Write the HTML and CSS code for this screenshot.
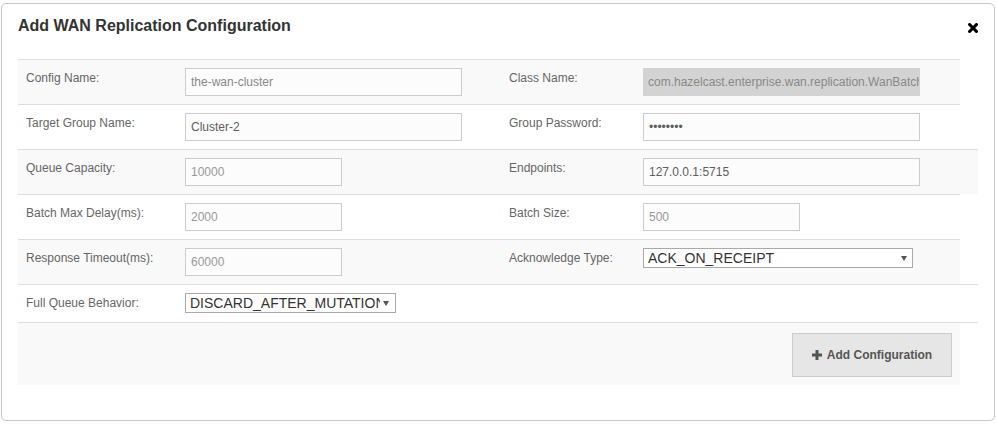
FILE: index.html
```html
<!DOCTYPE html>
<html>
<head>
<meta charset="utf-8">
<title>Add WAN Replication Configuration</title>
<link rel="stylesheet" href="styles.css">
</head>
<body>
<div class="modal">
  <div class="modal-header">
    <h4 class="modal-title">Add WAN Replication Configuration</h4>
    <button class="close" type="button" aria-label="Close">
      <svg width="10" height="10" viewBox="0 0 10 10"><path d="M1.6 1.6 L8.4 8.4 M8.4 1.6 L1.6 8.4" stroke="#000" stroke-width="3" stroke-linecap="square" fill="none"/></svg>
    </button>
  </div>
  <div class="modal-body">
    <div class="form-table">
      <div class="form-row striped">
        <label class="cell label">Config Name:</label>
        <div class="cell"><input class="input long muted" type="text" value="the-wan-cluster"></div>
        <label class="cell label">Class Name:</label>
        <div class="cell"><input class="input long disabled" type="text" value="com.hazelcast.enterprise.wan.replication.WanBatchReplication" disabled></div>
      </div>
      <div class="form-row">
        <label class="cell label">Target Group Name:</label>
        <div class="cell"><input class="input long value" type="text" value="Cluster-2"></div>
        <label class="cell label">Group Password:</label>
        <div class="cell"><input class="input long value" type="password" value="password"></div>
      </div>
      <div class="form-row striped wide">
        <label class="cell label">Queue Capacity:</label>
        <div class="cell"><input class="input short" type="text" value="10000"></div>
        <label class="cell label">Endpoints:</label>
        <div class="cell"><input class="input long value" type="text" value="127.0.0.1:5715"></div>
      </div>
      <div class="form-row">
        <label class="cell label">Batch Max Delay(ms):</label>
        <div class="cell"><input class="input short" type="text" value="2000"></div>
        <label class="cell label">Batch Size:</label>
        <div class="cell"><input class="input short" type="text" value="500"></div>
      </div>
      <div class="form-row striped">
        <label class="cell label">Response Timeout(ms):</label>
        <div class="cell"><input class="input short" type="text" value="60000"></div>
        <label class="cell label">Acknowledge Type:</label>
        <div class="cell"><span class="select-wrap ack"><select class="select"><option>ACK_ON_RECEIPT</option><option>ACK_ON_OPERATION_COMPLETE</option></select></span></div>
      </div>
      <div class="form-row wide closing">
        <label class="cell label">Full Queue Behavior:</label>
        <div class="cell"><span class="select-wrap queue"><select class="select"><option>DISCARD_AFTER_MUTATION</option><option>THROW_EXCEPTION</option></select></span></div>
        <div class="cell"></div>
        <div class="cell"></div>
      </div>
      <div class="actions">
        <button class="btn" type="button">
          <svg width="10" height="10" viewBox="0 0 10 10"><rect x="3.5" y="0" width="3" height="10" fill="#555"/><rect x="0" y="3.5" width="10" height="3" fill="#555"/></svg>
          <span>Add Configuration</span>
        </button>
      </div>
    </div>
  </div>
</div>
</body>
</html>
```
FILE: styles.css
```css
html, body {
  margin: 0;
  padding: 0;
  background: #fff;
  font-family: "Liberation Sans", Arial, sans-serif;
}

.modal {
  margin: 3px 2px 0 1px;
  height: 418px;
  box-sizing: border-box;
  border: 1px solid #c8c8c8;
  border-radius: 5px;
  background: #fff;
  box-shadow: 0 1px 2px rgba(0, 0, 0, 0.04);
}

.modal-header {
  display: flex;
  justify-content: space-between;
  align-items: flex-start;
  padding: 13px 16px 0 16px;
}

.modal-title {
  margin: 0;
  font-size: 16px;
  line-height: 18px;
  font-weight: bold;
  color: #333;
}

.close {
  display: block;
  width: 10px;
  height: 10px;
  margin-top: 6px;
  padding: 0;
  border: 0;
  background: none;
}

.close svg {
  display: block;
}

.modal-body {
  padding: 24px 0 0 16px;
}

.form-row {
  display: grid;
  grid-template-columns: 159px 324px 134px 325px;
  width: 942px;
  border-top: 1px solid #ddd;
}

.form-row.wide {
  grid-template-columns: 159px 324px 134px 343px;
  width: 960px;
}

.form-row.closing {
  border-bottom: 1px solid #ddd;
}

.form-row.closing .cell {
  padding-bottom: 9px;
}

.striped {
  background: #f9f9f9;
}

.cell {
  padding: 8px;
  font-size: 12px;
  line-height: 20px;
  color: #666;
}

.input {
  display: block;
  box-sizing: border-box;
  height: 28px;
  margin: 0;
  padding: 0 5px;
  border: 1px solid #ccc;
  border-radius: 0;
  background: #fcfcfc;
  font-family: "Liberation Sans", Arial, sans-serif;
  font-size: 12px;
  color: #999;
  outline: none;
}

.input.long {
  width: 277px;
}

.input.short {
  width: 157px;
}

.input.muted {
  color: #888;
}

.input.value {
  color: #5e5e5e;
}

.input.disabled {
  padding-left: 4px;
  padding-right: 0;
  background: #d3d3d3;
  border-color: #d3d3d3;
  color: #888;
}

.select-wrap {
  position: relative;
  display: block;
  width: max-content;
}

.select-wrap::after {
  content: "";
  position: absolute;
  top: 8px;
  right: 7px;
  width: 0;
  height: 0;
  border-left: 3px solid transparent;
  border-right: 3px solid transparent;
  border-top: 5px solid #555;
  pointer-events: none;
}

.select-wrap.ack::after {
  right: 6px;
}

.select {
  display: block;
  box-sizing: border-box;
  height: 20px;
  margin: 0;
  padding: 0 15px 0 4px;
  border: 1px solid #aaa;
  border-radius: 0;
  background: #fff;
  -webkit-appearance: none;
  appearance: none;
  font-family: "Liberation Sans", Arial, sans-serif;
  font-size: 14px;
  line-height: 18px;
  color: #333;
  outline: none;
}

.select-wrap.ack .select {
  width: 270px;
}

.select-wrap.queue .select {
  width: 211px;
}

.actions {
  display: flex;
  justify-content: flex-end;
  box-sizing: border-box;
  width: 942px;
  padding: 10px 8px 8px;
  background: #f9f9f9;
}

.btn {
  display: flex;
  align-items: center;
  justify-content: center;
  gap: 5px;
  box-sizing: border-box;
  width: 160px;
  height: 44px;
  margin: 0;
  padding: 0;
  border: 1px solid #ccc;
  border-radius: 0;
  background: #e6e6e6;
  font-family: "Liberation Sans", Arial, sans-serif;
  font-size: 12px;
  font-weight: bold;
  color: #555;
}

.btn svg {
  display: block;
}
```
